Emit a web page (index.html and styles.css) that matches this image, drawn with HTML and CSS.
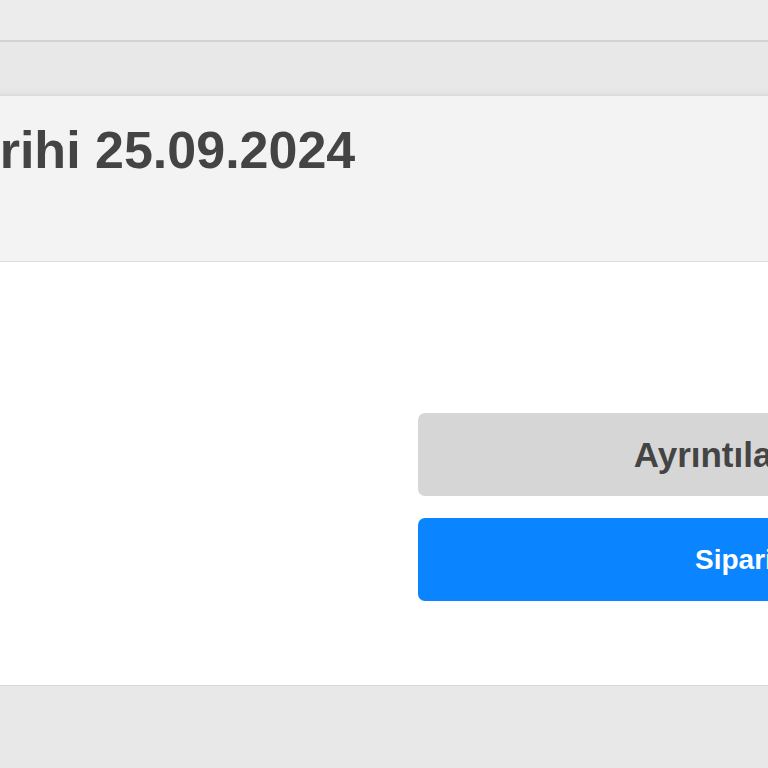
FILE: index.html
```html
<!DOCTYPE html>
<html lang="tr">
<head>
<meta charset="UTF-8">
<title>Siparişlerim</title>
<link rel="stylesheet" href="styles.css">
</head>
<body>
<div class="page">
  <div class="prev-card"></div>

  <div class="order-card">
    <div class="order-head">
      <h2 class="order-date">Sipariş Tarihi 25.09.2024</h2>
    </div>
    <div class="order-body">
      <div class="order-info"></div>
      <div class="order-actions">
        <button class="btn btn-details">Ayrıntıları Göster</button>
        <button class="btn btn-order">Sipariş Takibi</button>
      </div>
    </div>
  </div>
</div>
</body>
</html>
```

FILE: styles.css
```css
html, body {
    margin: 0;
    padding: 0;
    background-color: #e8e8e8;
    overflow: hidden;
}

body {
    font-family: "Liberation Sans", Arial, sans-serif;
    color: #444444;
}

.page {
    width: 1200px;
    margin-left: -300px;
}

.prev-card {
    height: 40px;
    background-color: #ececec;
    border-bottom: 2px solid #d2d2d2;
}

.order-card {
    margin-top: 54px;
    background-color: #ffffff;
    border-bottom: 1px solid #d8d8d8;
    box-shadow: 0 0 10px rgba(0, 0, 0, 0.08), 0 3px 5px rgba(0, 0, 0, 0.22);
}

.order-head {
    background-color: #f3f3f3;
    border-bottom: 1px solid #dcdcdc;
    padding: 24px 55px 81px;
}

.order-date {
    margin: 0;
    font-size: 52px;
    line-height: 60px;
    font-weight: bold;
    color: #444444;
    white-space: nowrap;
}

.order-body {
    display: grid;
    grid-template-columns: 667px 724px;
    padding: 151px 0 84px 51px;
}

.order-actions {
    display: flex;
    flex-direction: column;
    gap: 22px;
}

.btn {
    height: 83px;
    border: 0;
    border-radius: 7px;
    font-family: "Liberation Sans", Arial, sans-serif;
    font-weight: bold;
    white-space: nowrap;
    padding: 0;
}

.btn-details {
    background-color: #d6d6d6;
    color: #444444;
    font-size: 35px;
    padding-right: 8px;
}

.btn-order {
    background-color: #0a84ff;
    color: #ffffff;
    font-size: 28px;
    padding-left: 10px;
}
```
